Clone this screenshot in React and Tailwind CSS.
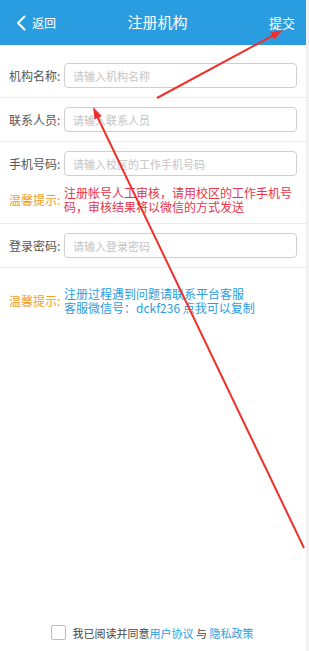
import React, { useState } from 'react';

const font = { fontFamily: '"Noto Sans CJK SC", "Noto Sans", sans-serif' };

const Field = ({ label, placeholder, children }) => (
  <div className="border-b border-[#ececec] px-[9px] py-[9px]">
    <div className="flex items-center h-[25px]">
      <span className="w-[55px] shrink-0 text-[12px] text-[#555]">{label}:</span>
      <input
        className="flex-1 h-[25px] border border-[#cfcfcf] rounded-[4px] px-[8px] text-[11px] outline-none placeholder:text-[#c4c4c4]"
        placeholder={placeholder}
      />
    </div>
    {children}
  </div>
);

const App = () => {
  const [agree, setAgree] = useState(false);

  return (
    <div className="w-[309px] h-[651px] flex bg-[#f1f1f1]" style={font}>
      <div className="w-[306px] h-full bg-white flex flex-col relative">
        {/* Header */}
        <div className="h-[45px] bg-[#2a9de1] flex items-center justify-between pl-[16px] pr-[11px] text-white">
          <div className="flex items-center w-[60px]">
            <svg width="10" height="16" viewBox="0 0 10 16" className="mr-[6px]">
              <polyline points="8.5,1.5 2,8 8.5,14.5" fill="none" stroke="white" strokeWidth="2" strokeLinecap="round" strokeLinejoin="round" />
            </svg>
            <span className="text-[12px]">返回</span>
          </div>
          <span className="text-[15px] pl-[4px]">注册机构</span>
          <span className="w-[60px] text-right text-[13px]">提交</span>
        </div>

        <div className="h-[9px]" />

        <Field label="机构名称" placeholder="请输入机构名称" />
        <Field label="联系人员" placeholder="请输入联系人员" />
        <Field label="手机号码" placeholder="请输入校区的工作手机号码">
          <div className="flex mt-[10px]">
            <span className="w-[55px] shrink-0 text-[12px] text-[#f0a01e] leading-[14px] pt-[7px]">温馨提示:</span>
            <p className="text-[12px] leading-[14px] text-[#e8334a]">
              注册帐号人工审核，请用校区的工作手机号码，审核结果将以微信的方式发送
            </p>
          </div>
        </Field>
        <Field label="登录密码" placeholder="请输入登录密码" />

        <div className="flex items-center px-[9px] pt-[19px]">
          <span className="w-[55px] shrink-0 text-[12px] text-[#f0a01e]">温馨提示:</span>
          <p className="text-[12px] leading-[14px] text-[#2a9de1]">
            注册过程遇到问题请联系平台客服
            <br />
            客服微信号：dckf236 点我可以复制
          </p>
        </div>

        <div className="flex-1" />

        <div className="flex items-center justify-center pb-[10px] pr-[2px]">
          <button
            onClick={() => setAgree(!agree)}
            className="w-[15px] h-[15px] border border-[#bdbdbd] rounded-[2px] mr-[7px] bg-white"
          />
          <span className="text-[11px] text-[#444]">
            我已阅读并同意<span className="text-[#2a9de1]">用户协议</span> 与 <span className="text-[#2a9de1]">隐私政策</span>
          </span>
        </div>

        {/* annotation arrows */}
        <svg className="absolute inset-0 pointer-events-none" width="309" height="651">
          <line x1="157" y1="98" x2="274" y2="35" stroke="#f0302a" strokeWidth="2" />
          <polygon points="283,30 274.3,39.2 270.5,32.2" fill="#f0302a" />
          <line x1="304" y1="548" x2="97" y2="116" stroke="#f0302a" strokeWidth="2" />
          <polygon points="93,107 101.8,116.1 94.6,119.5" fill="#f0302a" />
        </svg>
      </div>
    </div>
  );
};

export default App;
